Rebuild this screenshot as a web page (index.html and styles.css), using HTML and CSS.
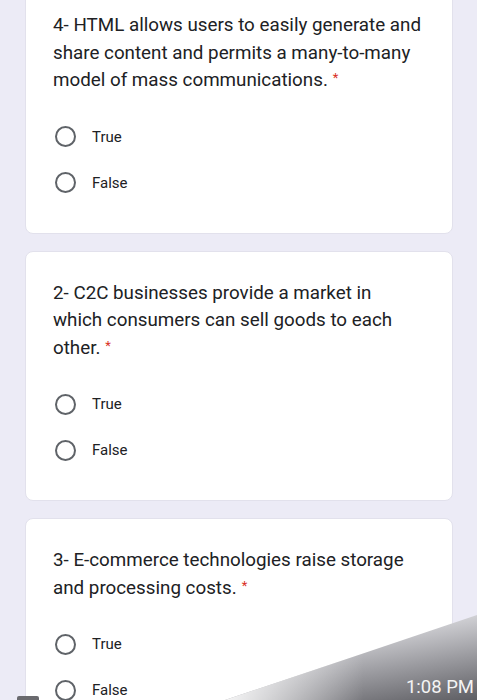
FILE: index.html
```html
<!DOCTYPE html>
<html>
<head>
<meta charset="utf-8">
<link rel="stylesheet" href="styles.css">
</head>
<body>
<div class="page">
  <div class="card">
    <div class="question">4- HTML allows users to easily generate and share content and permits a many-to-many model of mass communications.<span class="req">*</span></div>
    <div class="options">
      <div class="option"><span class="radio"></span><span class="label">True</span></div>
      <div class="option"><span class="radio"></span><span class="label">False</span></div>
    </div>
  </div>
  <div class="card">
    <div class="question">2- C2C businesses provide a market in which consumers can sell goods to each other.<span class="req">*</span></div>
    <div class="options">
      <div class="option"><span class="radio"></span><span class="label">True</span></div>
      <div class="option"><span class="radio"></span><span class="label">False</span></div>
    </div>
  </div>
  <div class="card">
    <div class="question">3- E-commerce technologies raise storage and processing costs.<span class="req">*</span></div>
    <div class="options">
      <div class="option"><span class="radio"></span><span class="label">True</span></div>
      <div class="option"><span class="radio"></span><span class="label">False</span></div>
    </div>
  </div>
</div>
<div class="shade"></div>
<div class="time">1:08 PM</div>
<div class="nub"></div>
</body>
</html>
```

FILE: styles.css
```css
html, body {
  margin: 0;
  padding: 0;
  height: 100%;
  overflow: hidden;
}
body {
  background: #ecebf6;
  font-family: Roboto, "Liberation Sans", sans-serif;
  color: #202124;
  position: relative;
}
.page {
  display: flex;
  flex-direction: column;
  gap: 17px;
  margin-top: -17px;
  padding-left: 25px;
  width: 428px;
}
.card {
  background: #fff;
  border: 1px solid #e2e1ec;
  border-radius: 8px;
  padding: 28px 26px 27px 27px;
}
.question {
  font-size: 18.8px;
  line-height: 27.5px;
  max-width: 370px;
}
.req {
  color: #d93025;
  font-size: 13px;
  line-height: 0;
  margin-left: 5px;
  vertical-align: 4px;
}
.options {
  margin-top: 19px;
  display: flex;
  flex-direction: column;
}
.option {
  height: 46px;
  display: flex;
  align-items: center;
}
.radio {
  width: 17px;
  height: 17px;
  border: 2px solid #5f6368;
  border-radius: 50%;
  margin-left: 2px;
  margin-right: 16px;
  flex: none;
}
.label {
  font-size: 15px;
  color: #202124;
}
.shade {
  position: absolute;
  left: 225px;
  top: 615px;
  width: 252px;
  height: 85px;
  clip-path: polygon(0 100%, 100% 0, 100% 100%);
  background:
    linear-gradient(to right, rgba(255,255,255,0.9) 0%, rgba(255,255,255,0) 55%),
    linear-gradient(170deg, #d8d8dc 30%, #9a9a9f 65%, #5e5e63 100%);
}
.time {
  position: absolute;
  right: 3px;
  top: 675px;
  font-size: 18.5px;
  color: #f4f4f4;
  line-height: 24px;
}
.nub {
  position: absolute;
  left: 17px;
  top: 696px;
  width: 22px;
  height: 4px;
  background: #6a6a6e;
  border-radius: 2px 2px 0 0;
}
```
